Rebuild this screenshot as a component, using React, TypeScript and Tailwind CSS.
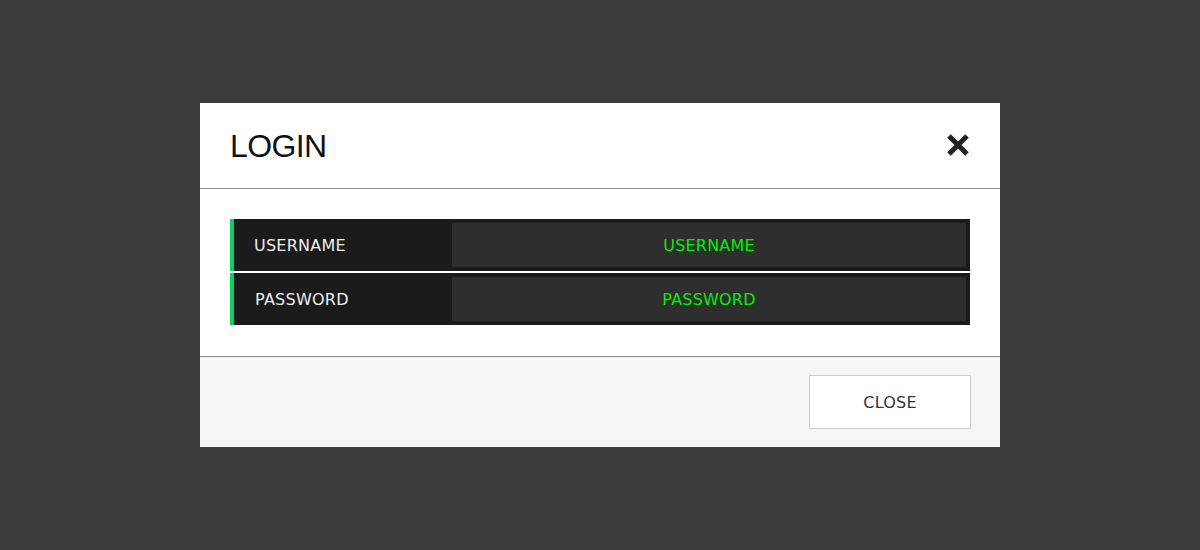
export default function App() {
  return (
    <div className="flex h-[550px] w-full items-center justify-center bg-[#3c3c3c] font-['DejaVu_Sans',sans-serif]">
      <div className="w-[800px] bg-white">
        {/* header */}
        <div className="flex h-[86px] items-center justify-between border-b border-[#8c8c8c] px-[30px] pb-px">
          <h1 className="pt-[2px] font-['Liberation_Sans',Arial,sans-serif] text-[32px] leading-none tracking-[-0.6px] text-[#111]">
            LOGIN
          </h1>
          <button className="flex h-6 w-6 items-center justify-center">
            <svg width="24" height="24" viewBox="0 0 24 24">
              <path d="M3 3L21 21M21 3L3 21" stroke="#222" strokeWidth="5" strokeLinecap="butt" />
            </svg>
          </button>
        </div>

        {/* body */}
        <div className="flex flex-col gap-[2px] border-b border-[#8c8c8c] px-[30px] pt-[30px] pb-[31px]">
          <Field label="USERNAME" placeholder="USERNAME" />
          <Field label="PASSWORD" placeholder="PASSWORD" pad />
        </div>

        {/* footer */}
        <div className="flex h-[90px] items-center justify-end bg-[#f5f5f7] pr-[29px]">
          <button className="h-[54px] w-[162px] border border-[#cccccc] bg-white pt-px text-[16px] tracking-[0.2px] text-[#333]">
            CLOSE
          </button>
        </div>
      </div>
    </div>
  );
}

function Field({ label, placeholder, pad }: { label: string; placeholder: string; pad?: boolean }) {
  return (
    <div className="flex h-[52px] border-l-4 border-[#00d26a] bg-[#1b1b1b] py-1 pr-1">
      <div className={`flex w-[218px] items-center pt-[2px] text-[16px] tracking-[0.25px] text-[#eeeeee] ${pad ? "pl-[21px]" : "pl-5"}`}>
        {label}
      </div>
      <div className="flex flex-1 items-center justify-center bg-[#2e2e2e] pt-[2px] text-[16px] tracking-[0.2px] text-[#00f000]">
        {placeholder}
      </div>
    </div>
  );
}
